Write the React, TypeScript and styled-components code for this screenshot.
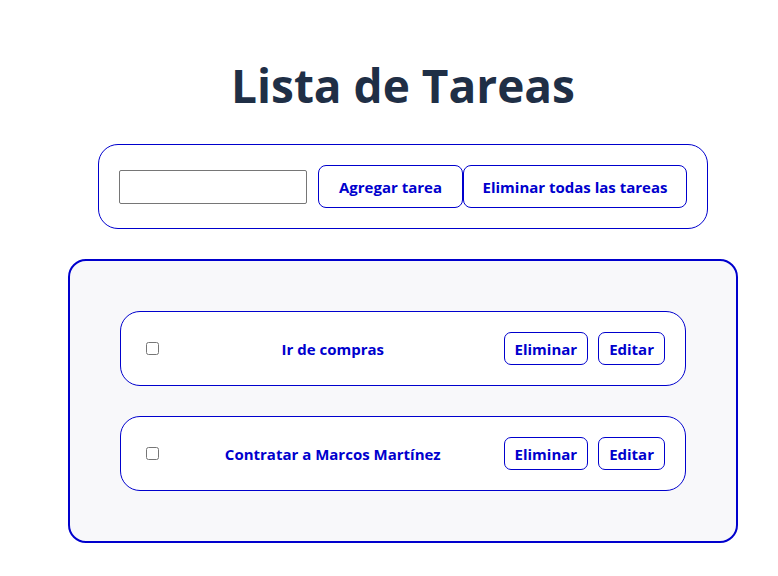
import styled, { createGlobalStyle } from 'styled-components'

const GlobalStyle = createGlobalStyle`
  body {
    margin: 0;
    background: #ffffff;
    font-family: "Open Sans", "Noto Sans", sans-serif;
  }
`

const Main = styled.main`
  width: 670px;
  margin-left: 68px;
  display: flex;
  flex-direction: column;
  align-items: center;
`

const Title = styled.h1`
  margin: 52px 0 26px;
  font-size: 46px;
  line-height: 66px;
  font-weight: 700;
  color: #1f2f46;
`

const Form = styled.form`
  display: flex;
  align-items: center;
  padding: 20px;
  border: 1px solid #0000cd;
  border-radius: 20px;
`

const Input = styled.input`
  box-sizing: border-box;
  width: 188px;
  height: 34px;
  margin-right: 11px;
  border: 1px solid #767676;
  border-radius: 2px;
  padding: 2px 6px;
  font: inherit;
`

const Button = styled.button<{ $wide?: boolean }>`
  box-sizing: border-box;
  height: 43px;
  width: ${p => (p.$wide ? '224px' : '145px')};
  background: #ffffff;
  border: 1px solid #0000cd;
  border-radius: 8px;
  color: #0000cd;
  font-family: inherit;
  font-size: 15px;
  font-weight: 700;
  cursor: pointer;
`

const List = styled.ul`
  box-sizing: border-box;
  width: 670px;
  margin: 30px 0 0;
  padding: 50px;
  list-style: none;
  display: flex;
  flex-direction: column;
  gap: 30px;
  background: #f8f8fa;
  border: 2px solid #0000cd;
  border-radius: 18px;
`

const Task = styled.li`
  box-sizing: border-box;
  height: 75px;
  display: flex;
  align-items: center;
  padding: 0 20px 0 21px;
  background: #ffffff;
  border: 1px solid #0000cd;
  border-radius: 20px;
`

const Check = styled.input`
  width: 13px;
  height: 13px;
  margin: 3px 3px 3px 4px;
`

const TaskText = styled.span`
  flex: 1;
  text-align: center;
  color: #0000cd;
  font-size: 15px;
  font-weight: 700;
`

const Actions = styled.div`
  display: flex;
  gap: 10px;
`

const SmallButton = styled.button`
  box-sizing: border-box;
  height: 33px;
  padding: 0 10px;
  background: #ffffff;
  border: 1px solid #0000cd;
  border-radius: 7px;
  color: #0000cd;
  font-family: inherit;
  font-size: 15px;
  font-weight: 700;
  cursor: pointer;
`

const tasks = ['Ir de compras', 'Contratar a Marcos Martínez']

export default function App() {
  return (
    <>
      <GlobalStyle />
      <Main>
        <Title>Lista de Tareas</Title>
        <Form onSubmit={e => e.preventDefault()}>
          <Input type="text" />
          <Button type="submit">Agregar tarea</Button>
          <Button type="button" $wide>Eliminar todas las tareas</Button>
        </Form>
        <List>
          {tasks.map(t => (
            <Task key={t}>
              <Check type="checkbox" />
              <TaskText>{t}</TaskText>
              <Actions>
                <SmallButton>Eliminar</SmallButton>
                <SmallButton>Editar</SmallButton>
              </Actions>
            </Task>
          ))}
        </List>
      </Main>
    </>
  )
}
